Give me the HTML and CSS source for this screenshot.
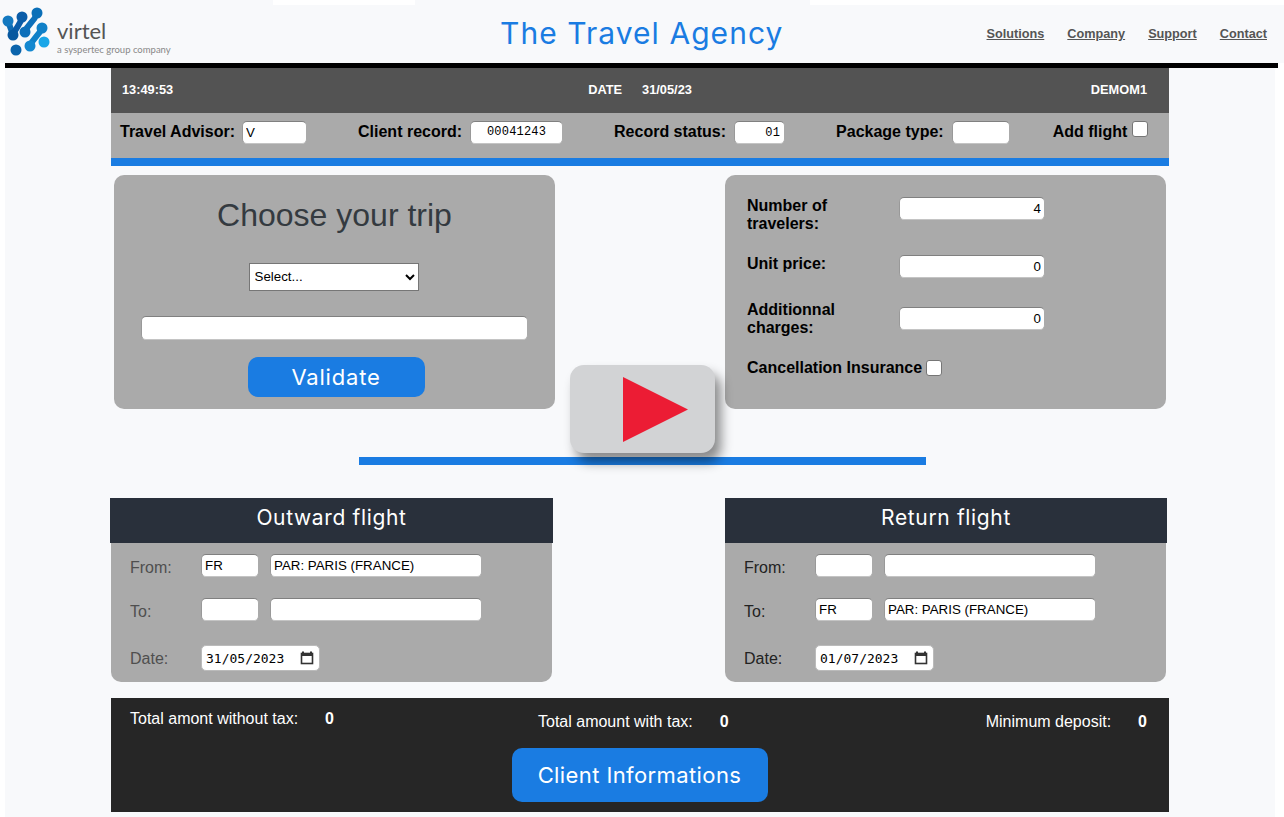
FILE: index.html
```html
<!DOCTYPE html>
<html lang="en">
<head>
    <meta charset="UTF-8">
    <title>The Travel Agency</title>
    <link rel="stylesheet" href="styles.css">
</head>
<body>
    <header class="site-header">
        <div class="logo">
            <svg class="logo-mark" width="54" height="58" viewBox="0 0 54 58">
                <g fill="none" stroke-width="6" stroke-linecap="round">
                    <path d="M8 19 L13 33" stroke="#0f6cb4"/>
                    <path d="M22 15 C20 24 16 25 13 33" stroke="#0a5ca8"/>
                    <path d="M37 11 C34 21 28 21 25 30" stroke="#0d6fba"/>
                    <path d="M42 26 C38 35 33 36 30 44" stroke="#1080c8"/>
                </g>
                <circle cx="8" cy="19" r="5.5" fill="#1479c0"/>
                <circle cx="22" cy="15" r="5.5" fill="#0a5ca8"/>
                <circle cx="37" cy="11" r="5.5" fill="#0a6fb8"/>
                <circle cx="13" cy="33" r="5.5" fill="#07589f"/>
                <circle cx="25" cy="30" r="5.5" fill="#0d6fba"/>
                <circle cx="42" cy="26" r="5.5" fill="#1080c8"/>
                <circle cx="16" cy="48" r="5.5" fill="#0a64ac"/>
                <circle cx="30" cy="44" r="5.5" fill="#1488d0"/>
                <circle cx="44" cy="40" r="5.5" fill="#1aa6e8"/>
            </svg>
            <div class="logo-text">
                <span class="logo-name">virtel</span>
                <span class="logo-sub">a syspertec group company</span>
            </div>
        </div>
        <h1 class="site-title">The Travel Agency</h1>
        <nav class="site-nav">
            <a href="#">Solutions</a>
            <a href="#">Company</a>
            <a href="#">Support</a>
            <a href="#">Contact</a>
        </nav>
    </header>
    <div class="header-rule"></div>

    <main class="main">
        <div class="content">
            <div class="status-bar">
                <span>13:49:53</span>
                <span class="status-date"><span>DATE</span><span>31/05/23</span></span>
                <span>DEMOM1</span>
            </div>
            <div class="record-bar">
                <label class="field">Travel Advisor: <input class="input w-advisor" type="text" value="V"></label>
                <label class="field">Client record: <input class="input w-record mono-center" type="text" value="00041243"></label>
                <label class="field">Record status: <input class="input w-status mono-right" type="text" value="01"></label>
                <label class="field">Package type: <input class="input w-package" type="text"></label>
                <label class="field field-check">Add flight <input class="check" type="checkbox"></label>
            </div>

            <div class="cards">
                <section class="card trip">
                    <h2 class="trip-title">Choose your trip</h2>
                    <select class="trip-select"><option>Select...</option></select>
                    <input class="input trip-input" type="text">
                    <button class="btn btn-validate" type="button">Validate</button>
                </section>
                <section class="card pricing">
                    <div class="price-row">
                        <label class="price-label">Number of travelers:</label>
                        <input class="input w-price align-right" type="text" value="4">
                    </div>
                    <div class="price-row row-unit">
                        <label class="price-label">Unit price:</label>
                        <input class="input w-price align-right" type="text" value="0">
                    </div>
                    <div class="price-row row-extra">
                        <label class="price-label">Additionnal charges:</label>
                        <input class="input w-price align-right" type="text" value="0">
                    </div>
                    <label class="insurance">Cancellation Insurance <input class="check" type="checkbox"></label>
                </section>
            </div>

            <div class="divider"></div>

            <div class="flights">
                <section class="flight flight-out">
                    <h3 class="flight-head">Outward flight</h3>
                    <div class="flight-body">
                        <div class="flight-row">
                            <span class="flight-label">From:</span>
                            <input class="input w-code" type="text" value="FR">
                            <input class="input w-city" type="text" value="PAR: PARIS (FRANCE)">
                        </div>
                        <div class="flight-row">
                            <span class="flight-label">To:</span>
                            <input class="input w-code" type="text">
                            <input class="input w-city" type="text">
                        </div>
                        <div class="flight-row row-date">
                            <span class="flight-label">Date:</span>
                            <div class="date-box">
                                <input class="date-text" type="text" value="31/05/2023">
                                <svg width="14" height="14" viewBox="0 0 14 14"><path d="M3 0.5v2M11 0.5v2" stroke="#333" stroke-width="2"/><rect x="1.5" y="2.5" width="11" height="10" fill="none" stroke="#333" stroke-width="1.6"/><rect x="1.5" y="2" width="11" height="3" fill="#333"/></svg>
                            </div>
                        </div>
                    </div>
                </section>
                <section class="flight flight-back">
                    <h3 class="flight-head">Return flight</h3>
                    <div class="flight-body">
                        <div class="flight-row">
                            <span class="flight-label">From:</span>
                            <input class="input w-code" type="text">
                            <input class="input w-city" type="text">
                        </div>
                        <div class="flight-row">
                            <span class="flight-label">To:</span>
                            <input class="input w-code" type="text" value="FR">
                            <input class="input w-city" type="text" value="PAR: PARIS (FRANCE)">
                        </div>
                        <div class="flight-row row-date">
                            <span class="flight-label">Date:</span>
                            <div class="date-box">
                                <input class="date-text" type="text" value="01/07/2023">
                                <svg width="14" height="14" viewBox="0 0 14 14"><path d="M3 0.5v2M11 0.5v2" stroke="#333" stroke-width="2"/><rect x="1.5" y="2.5" width="11" height="10" fill="none" stroke="#333" stroke-width="1.6"/><rect x="1.5" y="2" width="11" height="3" fill="#333"/></svg>
                            </div>
                        </div>
                    </div>
                </section>
            </div>

            <section class="totals">
                <div class="totals-row">
                    <div class="total total-plain"><span>Total amont without tax:</span><b>0</b></div>
                    <div class="total total-tax"><span>Total amount with tax:</span><b>0</b></div>
                    <div class="total total-deposit"><span>Minimum deposit:</span><b>0</b></div>
                </div>
                <button class="btn btn-client" type="button">Client Informations</button>
            </section>
        </div>

        <div class="play">
            <svg width="65" height="65" viewBox="0 0 65 65"><polygon points="0,0 65,32.5 0,65" fill="#ec1c34"/></svg>
        </div>
    </main>
</body>
</html>
```

FILE: styles.css
```css
* {
    box-sizing: border-box;
}

body {
    margin: 0;
    background-color: #fff;
    font-family: "Liberation Sans", Arial, sans-serif;
    color: #000;
}

/* header */
.site-header {
    position: relative;
    display: flex;
    align-items: flex-start;
    height: 63px;
    background-color: #f8f9fb;
    background-image: linear-gradient(90deg, #f8f9fb 273px, #fff 273px, #fff 415px, #f8f9fb 415px, #f8f9fb 810px, #fff 810px);
    background-size: 100% 5px;
    background-repeat: no-repeat;
}

.logo {
    display: flex;
    width: 480px;
}

.logo-mark {
    flex: none;
    margin-top: 2px;
}

.logo-text {
    display: flex;
    flex-direction: column;
    margin-left: 3px;
    padding-top: 18px;
}

.logo-name {
    font-family: Lato, sans-serif;
    font-size: 22px;
    line-height: 26px;
    color: #555;
}

.logo-sub {
    font-family: Lato, sans-serif;
    font-size: 9.5px;
    line-height: 11px;
    color: #888;
    white-space: nowrap;
}

.site-title {
    margin: 15px 0 0 20px;
    font-family: Inter, sans-serif;
    font-size: 30px;
    line-height: 36px;
    font-weight: 400;
    letter-spacing: 1.05px;
    color: #1a7ce2;
    white-space: nowrap;
}

.site-nav {
    display: flex;
    gap: 23px;
    position: absolute;
    right: 17px;
    top: 26px;
}

.site-nav a {
    font-size: 12.7px;
    line-height: 16px;
    font-weight: 700;
    color: #555;
}

.header-rule {
    height: 5px;
    margin: 0 6px 0 5px;
    background-color: #000;
}

.main {
    position: relative;
    margin: 0 9px 0 5px;
    padding-bottom: 5px;
    background-color: #f8f9fb;
}

.content {
    width: 1058px;
    margin-left: 106px;
}

/* top bars */
.status-bar {
    display: flex;
    justify-content: space-between;
    align-items: center;
    height: 45px;
    padding: 0 22px 2px 11px;
    background-color: #535353;
    color: #fff;
    font-size: 12.8px;
    font-weight: 700;
}

.status-date {
    display: flex;
    gap: 20px;
    margin-left: 16px;
}

.record-bar {
    display: flex;
    align-items: flex-start;
    gap: 51px;
    height: 53px;
    padding: 8px 0 0 9px;
    background-color: #aaa;
    border-bottom: 8px solid #1a7ce2;
}

.field {
    display: flex;
    gap: 8px;
    font-size: 16px;
    line-height: 21px;
    font-weight: 700;
    white-space: nowrap;
}

.field:first-child {
    gap: 7px;
}

.field-check {
    gap: 5px;
    margin-left: -8px;
}

.input {
    height: 23px;
    padding: 0 3px 1px;
    border: 1px solid;
    border-color: #808080 #aaa #c4c4c4 #999;
    border-radius: 5px;
    background-color: #fff;
    font-family: "Liberation Sans", Arial, sans-serif;
    font-size: 13.33px;
    color: #000;
}

.check {
    width: 16px;
    height: 16px;
    margin: 0;
    appearance: none;
    background-color: #fff;
    border: 1px solid #767676;
    border-radius: 3px;
}

.align-right {
    text-align: right;
}

.mono-center {
    text-align: center;
    font-family: "Liberation Mono", monospace;
    font-size: 12px;
    letter-spacing: 0.2px;
}

.mono-right {
    padding-right: 4px;
    padding-bottom: 0;
    text-align: right;
    font-family: "Liberation Mono", monospace;
    font-size: 12px;
    letter-spacing: 0.2px;
}

.w-advisor { width: 65px; }
.w-record { width: 93px; }
.w-status { width: 51px; }
.w-package { width: 58px; }
.w-price { width: 146px; padding-bottom: 0; }
.w-code { width: 58px; }
.w-city { width: 212px; }

/* cards */
.cards {
    display: flex;
    justify-content: space-between;
    padding: 9px 3px 0;
}

.card {
    width: 441px;
    height: 234px;
    border-radius: 10px;
    background-color: #aaa;
}

.trip {
    display: flex;
    flex-direction: column;
    align-items: center;
    padding-top: 22px;
}

.trip-title {
    margin: 0;
    font-size: 32px;
    line-height: 36px;
    font-weight: 400;
    color: #343a40;
}

.trip-select {
    width: 170px;
    height: 28px;
    margin: 30px 2px 0 0;
    padding: 0 0 2px 1px;
    border: 1px solid #767676;
    border-radius: 0;
    background-color: #fff;
    font-family: "Liberation Sans", Arial, sans-serif;
    font-size: 13.33px;
    color: #000;
}

.trip-input {
    width: 387px;
    height: 24px;
    margin: 25px 1px 0 0;
}

.btn {
    border: none;
    background-color: #1a7ce2;
    color: #fff;
    font-family: Inter, sans-serif;
}

.btn-validate {
    width: 177px;
    height: 40px;
    margin: 17px 0 0 3px;
    border-radius: 10px;
    font-size: 22px;
    letter-spacing: 0.8px;
}

.pricing {
    padding: 22px 0 0 22px;
}

.price-row {
    display: flex;
    align-items: flex-start;
}

.row-unit {
    margin-top: 22px;
}

.row-extra {
    margin-top: 29px;
}

.row-extra .price-label {
    margin-top: -6px;
}

.price-label {
    width: 152px;
    font-size: 16px;
    line-height: 18px;
    font-weight: 700;
}

.insurance {
    display: flex;
    align-items: center;
    gap: 4px;
    margin-top: 21px;
    font-size: 16px;
    line-height: 20px;
    font-weight: 700;
}

/* play button over the form */
.play {
    position: absolute;
    left: 565px;
    top: 297px;
    display: flex;
    justify-content: flex-end;
    align-items: center;
    width: 145px;
    height: 88px;
    padding-right: 27px;
    border-radius: 14px;
    background-color: #d2d3d5;
    box-shadow: 6px 9px 12px rgba(0, 0, 0, 0.45);
}

.divider {
    width: 567px;
    height: 8px;
    margin: 48px 0 0 248px;
    background-color: #1a7ce2;
}

/* flights */
.flights {
    display: flex;
    margin-top: 33px;
}

.flight-out {
    width: 443px;
    margin-left: -1px;
}

.flight-back {
    width: 442px;
    margin-left: 172px;
}

.flight-head {
    height: 45px;
    margin: 0;
    background-color: #29303b;
    color: #fff;
    font-family: Inter, sans-serif;
    font-size: 21px;
    line-height: 40px;
    font-weight: 400;
    letter-spacing: 0.65px;
    text-align: center;
}

.flight-body {
    height: 139px;
    margin: 0 1px;
    padding-top: 11px;
    border-radius: 0 0 10px 10px;
    background-color: #aaa;
}

.flight-back .flight-body {
    margin: 0 1px 0 0;
}

.flight-row {
    display: flex;
    gap: 11px;
    align-items: flex-start;
    padding-left: 19px;
    margin-bottom: 21px;
}

.row-date {
    margin-top: 25px;
    margin-bottom: 0;
}

.flight-label {
    width: 60px;
    padding-top: 5px;
    font-size: 16px;
    line-height: 18px;
    color: #4f4f4f;
}

.row-date .flight-label {
    padding-top: 4px;
}

.flight-back .flight-label {
    color: #222;
}

.date-box {
    display: flex;
    align-items: center;
    justify-content: space-between;
    width: 119px;
    height: 26px;
    margin-top: -1px;
    padding: 0 5px 0 4px;
    border: 1px solid #bbb;
    border-radius: 5px;
    background-color: #fff;
}

.date-text {
    width: 90px;
    padding: 0;
    border: none;
    background: none;
    font-family: "DejaVu Sans Mono", monospace;
    font-size: 13px;
    color: #000;
}

/* totals */
.totals {
    display: flex;
    flex-direction: column;
    align-items: center;
    height: 114px;
    margin-top: 16px;
    padding: 12px 22px 0 19px;
    background-color: #262626;
    color: #fff;
}

.totals-row {
    display: flex;
    align-items: flex-start;
    align-self: stretch;
    height: 38px;
    font-size: 16px;
    line-height: 18px;
}

.total {
    display: flex;
    gap: 27px;
    white-space: nowrap;
}

.total-tax {
    margin: 3px 0 0 204px;
}

.total-deposit {
    margin: 3px 0 0 auto;
}

.btn-client {
    width: 256px;
    height: 54px;
    margin-left: 2px;
    border-radius: 10px;
    font-size: 22px;
    letter-spacing: 0.4px;
}
```
